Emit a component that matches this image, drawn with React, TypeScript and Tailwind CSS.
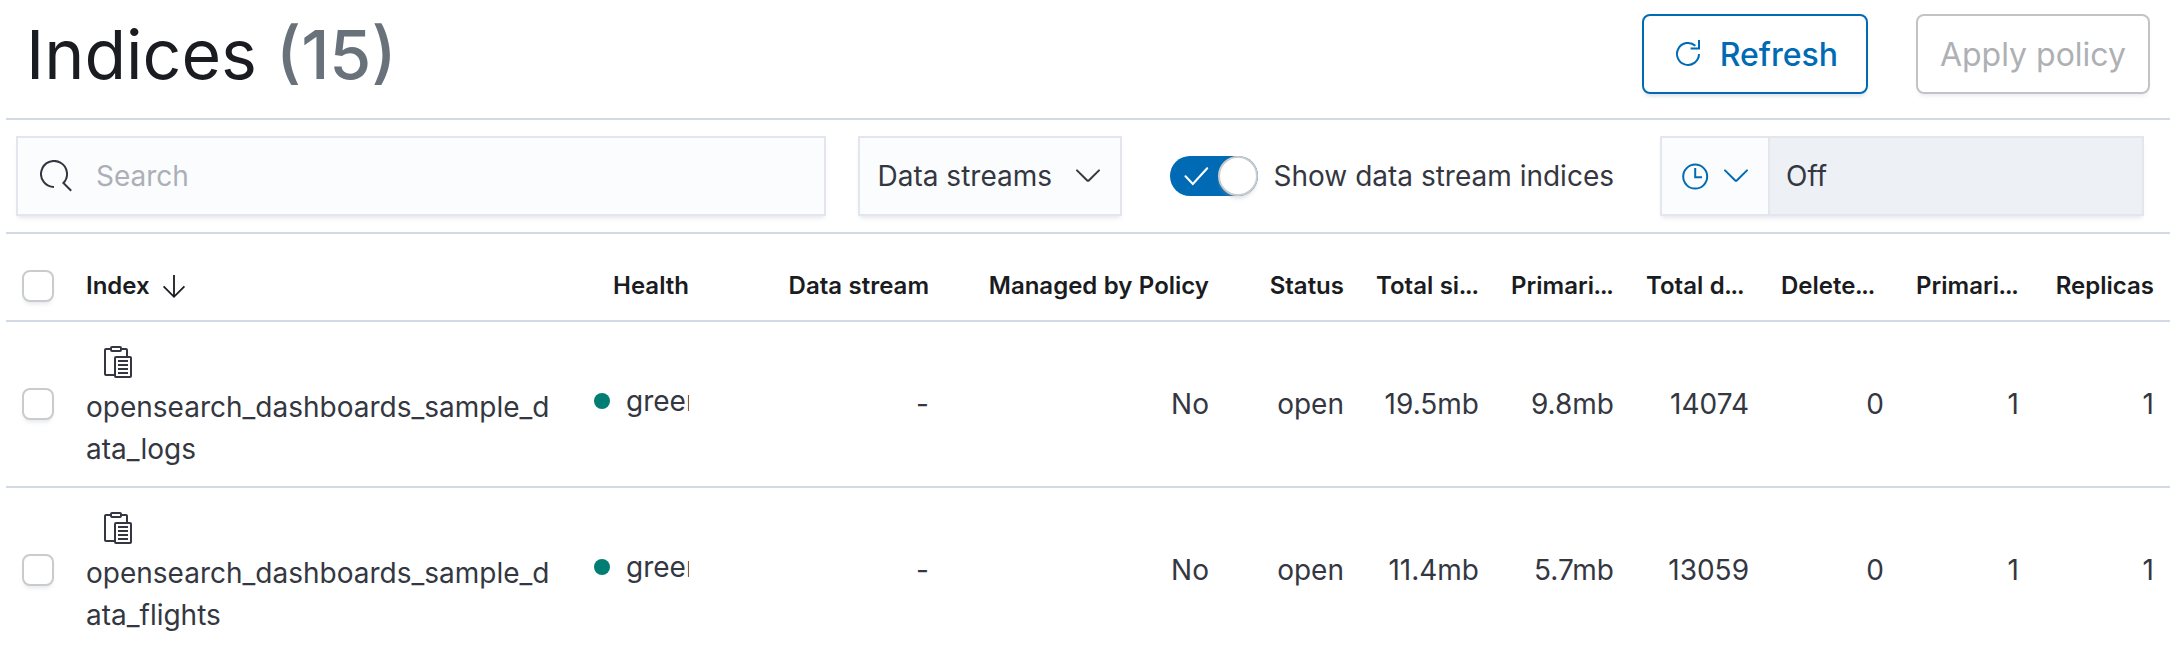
import type { ReactNode } from "react";
import clsx from "clsx";

const columns = [
  { key: "health", label: "Health", width: "w-[135px]" },
  { key: "stream", label: "Data stream", width: "w-[240px]" },
  { key: "managed", label: "Managed by Policy", width: "w-[280px]" },
  { key: "status", label: "Status", width: "w-[135px]" },
  { key: "size", label: "Total si...", width: "w-[135px]", short: true },
  { key: "primarySize", label: "Primari...", width: "w-[135px]", short: true },
  { key: "docs", label: "Total d...", width: "w-[135px]", short: true },
  { key: "deleted", label: "Delete...", width: "w-[135px]", short: true },
  { key: "primaries", label: "Primari...", width: "w-[135px]", short: true },
  { key: "replicas", label: "Replicas", width: "w-[135px]" },
];

const indices = [
  {
    name: "opensearch_dashboards_sample_data_logs",
    health: "green",
    values: ["-", "No", "open", "19.5mb", "9.8mb", "14074", "0", "1", "1"],
  },
  {
    name: "opensearch_dashboards_sample_data_flights",
    health: "green",
    values: ["-", "No", "open", "11.4mb", "5.7mb", "13059", "0", "1", "1"],
  },
];

function Icon({ children, className }: { children: ReactNode; className?: string }) {
  return (
    <svg
      viewBox="0 0 16 16"
      fill="none"
      stroke="currentColor"
      aria-hidden="true"
      className={clsx("shrink-0", className ?? "h-8 w-8")}
    >
      {children}
    </svg>
  );
}

function ChevronIcon() {
  return (
    <Icon>
      <path d="M2.5 5.2 7.6 10.2a.6.6 0 0 0 .8 0L13.5 5.2" strokeLinecap="round" />
    </Icon>
  );
}

function CopyIcon() {
  return (
    <Icon>
      <path d="M4.5 1.5H2a.5.5 0 0 0-.5.5v12a.5.5 0 0 0 .5.5h4.5M9.5 1.5H12a.5.5 0 0 1 .5.5v3.5" />
      <rect x="4.5" y="0.5" width="5" height="2" rx="0.5" />
      <rect x="6.5" y="5.5" width="8" height="10" rx="0.5" />
      <path d="M8 7.5h5M8 9.5h5M8 11.5h5M8 13.5h5" />
    </Icon>
  );
}

function Checkbox({ label }: { label: string }) {
  return (
    <input
      type="checkbox"
      aria-label={label}
      className="block h-8 w-8 appearance-none rounded-lg border-2 border-[#cacbcd] bg-white shadow-[0_4px_4px_-2px_rgba(152,162,179,0.25)] checked:bg-[#006bb4]"
    />
  );
}

function Header() {
  return (
    <header className="flex items-start justify-between border-b-2 border-[#d3dae6] pt-3.5 pr-5 pb-6 pl-5">
      <h1 className="text-[68px] leading-20 font-normal text-[#1a1c21]">
        Indices <span className="font-medium text-[#69727a]">(15)</span>
      </h1>
      <div className="flex gap-12 text-[32px]">
        <button className="flex h-20 items-center gap-4 rounded-lg border-2 border-[#006bb4] px-7 font-medium text-[#006bb4] shadow-[0_4px_4px_-2px_rgba(54,97,126,0.2)]">
          <Icon>
            <path d="M13.5 8A5.5 5.5 0 1 1 11.7 3.9M13.5 1v4.3H9.3" />
          </Icon>
          <span className="pt-0.5">Refresh</span>
        </button>
        <button
          disabled
          className="h-20 rounded-lg border-2 border-[#c2c3c6] px-[22px] pt-0.5 text-[#afb0b4] shadow-[0_4px_4px_-2px_rgba(152,162,179,0.2)]"
        >
          Apply policy
        </button>
      </div>
    </header>
  );
}

function Toolbar() {
  const box = "h-20 border-2 border-[#e3e6ef] bg-[#fbfcfd] shadow-[0_4px_4px_-2px_rgba(152,162,179,0.25)]";

  return (
    <div className="flex items-center border-b-2 border-[#d3dae6] py-4 pr-[26px] pl-2.5">
      <label className={clsx(box, "flex grow items-center gap-6 pl-[22px]")}>
        <Icon>
          <path d="M7 13.5A6.5 6.5 0 1 1 11.7 11.5L15.6 15.4" />
        </Icon>
        <input
          type="search"
          aria-label="Search"
          placeholder="Search"
          className="h-full min-w-0 grow bg-transparent outline-none placeholder:text-[#abb0b8]"
        />
      </label>
      <button className={clsx(box, "ml-8 flex w-[264px] shrink-0 items-center justify-between pr-4 pl-[18px]")}>
        Data streams
        <ChevronIcon />
      </button>
      <label className="ml-12 flex shrink-0 items-center gap-4">
        <input type="checkbox" role="switch" defaultChecked className="peer sr-only" />
        <span className="flex h-10 w-22 items-center justify-between rounded-full bg-[#006bb4] pl-3 text-white">
          <Icon className="h-7 w-7">
            <path d="M2 8.2 6.2 12.5 14.4 3.6" strokeLinecap="round" strokeWidth="1.2" />
          </Icon>
          <span className="h-10 w-10 rounded-full border-2 border-[#c9cbcd] bg-white shadow-[0_4px_4px_-2px_rgba(152,162,179,0.4)]" />
        </span>
        Show data stream indices
      </label>
      <div className={clsx(box, "ml-[46px] flex w-[484px]")}>
        <button
          aria-label="Refresh interval"
          className="flex w-[108px] shrink-0 items-center gap-2 border-r-2 border-[#e3e6ef] pl-[18px] text-[#006bb4]"
        >
          <Icon>
            <circle cx="7.6" cy="8.3" r="6" />
            <path d="M7.6 4v4.6H11" />
          </Icon>
          <ChevronIcon />
        </button>
        <input
          aria-label="Refresh rate"
          readOnly
          value="Off"
          className="min-w-0 grow bg-[#edf0f5] px-4 outline-none"
        />
      </div>
    </div>
  );
}

function IndicesTable() {
  return (
    <table className="mt-[18px] w-full table-fixed text-right">
      <colgroup>
        <col className="w-16" />
        <col />
        {columns.map((column) => (
          <col key={column.key} className={column.width} />
        ))}
      </colgroup>
      <thead className="text-2xl text-[#1a1c21] tabular-nums">
        <tr className="h-[69px] border-b-2 border-[#d3dae6]">
          <th className="pl-4">
            <Checkbox label="Select all indices" />
          </th>
          <th className="px-4 text-left font-semibold">
            <button className="flex items-center gap-2">
              Index
              <Icon>
                <path d="M8 2.5v11M2.8 8.2 8 13.4l5.2-5.2" strokeWidth="0.9" />
              </Icon>
            </button>
          </th>
          {columns.map((column) => (
            <th
              key={column.key}
              className={clsx("pl-4 font-semibold whitespace-nowrap", column.short ? "text-left" : "pr-4")}
            >
              {column.label}
            </th>
          ))}
        </tr>
      </thead>
      <tbody>
        {indices.map((index) => (
          <tr key={index.name} className="border-b-2 border-[#d3dae6]">
            <td className="pl-4">
              <Checkbox label={`Select ${index.name}`} />
            </td>
            <td className="px-4 py-4 text-left leading-[42px] break-all">
              <button aria-label="Copy index name" className="flex h-12 w-16 items-center justify-center">
                <CopyIcon />
              </button>
              {index.name}
            </td>
            <td className="px-4">
              <div className="flex items-center gap-2 overflow-hidden pb-1.5">
                <span className="flex w-8 shrink-0 justify-center">
                  <span className="h-4 w-4 rounded-full bg-[#017d73]" />
                </span>
                {index.health}
              </div>
            </td>
            {index.values.map((value, i) => (
              <td key={i} className="px-4">
                {value}
              </td>
            ))}
          </tr>
        ))}
      </tbody>
    </table>
  );
}

export default function App() {
  return (
    <main className="h-screen overflow-hidden bg-white pr-0.5 pl-1.5 font-['Inter',sans-serif] text-[28px] leading-[42px] text-[#343741]">
      <Header />
      <Toolbar />
      <IndicesTable />
    </main>
  );
}
